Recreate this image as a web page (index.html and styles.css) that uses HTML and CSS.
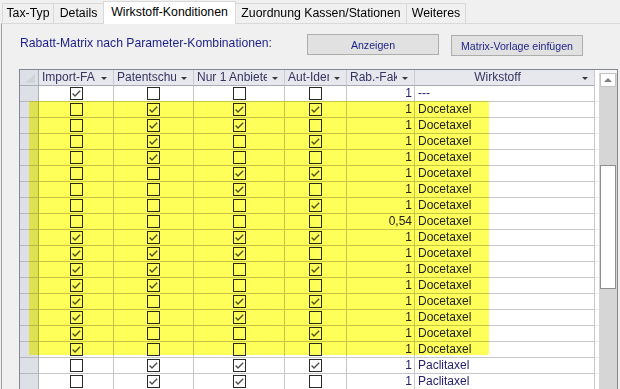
FILE: index.html
```html
<!DOCTYPE html>
<html lang="de">
  <head>
    <meta charset="UTF-8" />
    <title>Wirkstoff-Konditionen</title>
    <link rel="stylesheet" href="styles.css">
  </head>
  <body>
    <!-- Tab strip -->
    <div class="tabs">
      <div class="tab tab-tax">Tax-Typ</div>
      <div class="tab tab-details">Details</div>
      <div class="tab tab-active">Wirkstoff-Konditionen</div>
      <div class="tab tab-kassen">Zuordnung Kassen/Stationen</div>
      <div class="tab tab-weiteres">Weiteres</div>
    </div>

    <div class="panel">
      <div class="toolbar">
        <span class="caption">Rabatt-Matrix nach Parameter-Kombinationen:</span>
        <button class="btn">Anzeigen</button>
        <button class="btn btn-low">Matrix-Vorlage einfügen</button>
      </div>

      <!-- Matrix grid -->
      <div class="grid">
        <div class="grid-body" id="gridBody">
          <div class="row head">
            <div class="cell sel corner">
              <svg width="14" height="12" viewBox="0 0 14 12"><path d="M13 2 L13 11 L3 11 Z" fill="#cfd3da" /></svg>
            </div>
            <div class="cell hcell"><span class="hlabel">Import-FA</span><span class="arrow"></span></div>
            <div class="cell hcell"><span class="hlabel">Patentschutz</span><span class="arrow"></span></div>
            <div class="cell hcell"><span class="hlabel">Nur 1 Anbieter</span><span class="arrow"></span></div>
            <div class="cell hcell"><span class="hlabel">Aut-Idem</span><span class="arrow"></span></div>
            <div class="cell hcell"><span class="hlabel">Rab.-Faktor</span><span class="arrow"></span></div>
            <div class="cell hcell hcenter"><span class="hlabel">Wirkstoff</span><span class="arrow"></span></div>
            <div class="cell filler"></div>
          </div>
        </div>

        <div class="scrollbar">
          <div class="scroll-up"></div>
          <div class="scroll-thumb"></div>
        </div>

        <!-- highlighter marking over the Docetaxel rows -->
        <div class="marker"></div>
      </div>
    </div>

    <script>
      // flags: Import-FA, Patentschutz, Nur 1 Anbieter, Aut-Idem
      const rows = [
        ["1000", "1", "---"],
        ["0111", "1", "Docetaxel"],
        ["0110", "1", "Docetaxel"],
        ["0101", "1", "Docetaxel"],
        ["0100", "1", "Docetaxel"],
        ["0011", "1", "Docetaxel"],
        ["0010", "1", "Docetaxel"],
        ["0001", "1", "Docetaxel"],
        ["0000", "0,54", "Docetaxel"],
        ["1111", "1", "Docetaxel"],
        ["1110", "1", "Docetaxel"],
        ["1101", "1", "Docetaxel"],
        ["1100", "1", "Docetaxel"],
        ["1011", "1", "Docetaxel"],
        ["1010", "1", "Docetaxel"],
        ["1001", "1", "Docetaxel"],
        ["1000", "1", "Docetaxel"],
        ["0111", "1", "Paclitaxel"],
        ["0110", "1", "Paclitaxel"],
      ];

      const checkMark =
        '<svg width="11" height="11" viewBox="0 0 11 11"><path d="M1.6 5.6 L4 8 L9.2 2.8" fill="none" stroke="#505050" stroke-width="1.4" /></svg>';

      const body = document.getElementById("gridBody");

      rows.forEach(([flags, factor, name]) => {
        let html = '<div class="cell sel"></div>';
        for (const flag of flags) {
          html += '<div class="cell check"><span class="box">' +
            (flag === "1" ? checkMark : "") + "</span></div>";
        }
        html += `<div class="cell num">${factor}</div>`;
        html += `<div class="cell text">${name}</div>`;
        html += '<div class="cell filler"></div>';

        const row = document.createElement("div");
        row.className = "row";
        row.innerHTML = html;
        body.appendChild(row);
      });
    </script>
  </body>
</html>
```

FILE: styles.css
```css
* {
  margin: 0;
  padding: 0;
  box-sizing: border-box;
}

body {
  width: 620px;
  height: 389px;
  overflow: hidden;
  background-color: #f0f0f0;
  font-family: "Liberation Sans", Arial, sans-serif;
  font-size: 12px;
  color: #000;
}

/* Tabs */
.tabs {
  display: flex;
  align-items: flex-end;
  height: 23px;
  padding-left: 2px;
}

.tab {
  height: 20px;
  margin-right: -1px;
  border: 1px solid #d9d9d9;
  border-bottom: none;
  background-color: #f0f0f0;
  font-size: 12.3px;
  line-height: 19px;
  text-align: center;
  white-space: nowrap;
}

.tab-tax { width: 52px; }
.tab-details { width: 51px; }
.tab-kassen { width: 172px; }
.tab-weiteres { width: 60px; }

.tab-active {
  position: relative;
  width: 133px;
  height: 23px;
  margin-bottom: -1px;
  background-color: #fff;
  line-height: 20px;
  z-index: 1;
}

/* Tab page */
.panel {
  height: 366px;
  margin-left: 1px;
  border-top: 1px solid #d9d9d9;
  border-left: 1px solid #a0a0a0;
}

.toolbar {
  display: flex;
  align-items: flex-start;
  gap: 12px;
  padding: 10px 0 0 18px;
}

.caption {
  flex: 0 0 275px;
  font-size: 12.2px;
  line-height: 18px;
  color: #1c1f86;
  white-space: nowrap;
}

.btn {
  width: 132px;
  height: 21px;
  border: 1px solid #adadad;
  background-color: #e1e1e1;
  color: #1c1f86;
  font-family: "Liberation Sans", Arial, sans-serif;
  font-size: 10.6px;
}

.btn-low {
  margin-top: 1px;
}

/* Grid */
.grid {
  position: relative;
  display: flex;
  width: 599px;
  height: 330px;
  margin: 13px 0 0 17px;
  border: 1px solid #828790;
  background-color: #fff;
}

.grid-body {
  width: 579px;
}

.row {
  display: grid;
  grid-template-columns: 19px 75px 80px 91px 62px 68px 180px 4px;
  height: 16px;
}

.cell {
  display: flex;
  align-items: center;
  overflow: hidden;
  border-right: 1px solid #c6c6c6;
  border-bottom: 1px solid #c6c6c6;
  line-height: 15px;
  color: #22226a;
  white-space: nowrap;
}

.sel {
  background-color: #dde1e7;
  border-right-color: #a9adb4;
  border-bottom-color: #b4b8bf;
}

.corner {
  align-items: flex-end;
  justify-content: flex-end;
  padding: 0 2px 1px 0;
}

.head .hcell {
  background-color: #e6e8ed;
  border-right-color: #c9ccd2;
  border-bottom-color: #a9acb2;
  color: #34345e;
}

.head .sel {
  border-bottom-color: #a9acb2;
}

.hlabel {
  flex: 1;
  overflow: hidden;
  padding-left: 3px;
}

.hcenter .hlabel {
  text-align: center;
}

.arrow {
  flex: none;
  width: 0;
  height: 0;
  margin: 2px 6px 0 5px;
  border-left: 3px solid transparent;
  border-right: 3px solid transparent;
  border-top: 3px solid #3a3a3a;
}

.check {
  justify-content: center;
}

.box {
  display: block;
  width: 13px;
  height: 13px;
  border: 1px solid #2a2a2a;
  background-color: #fff;
}

.box svg {
  display: block;
}

.num {
  justify-content: flex-end;
  padding-right: 2px;
}

.text {
  padding-left: 3px;
}

.filler {
  border-right: none;
  border-bottom-color: #ececec;
}

.head .filler {
  border-bottom-color: #fff;
}

/* Scrollbar */
.scrollbar {
  width: 18px;
  padding: 0 1px;
  border-top: 3px solid #f6f6f6;
  background-color: #d6d6d6;
}

.scroll-up {
  display: flex;
  align-items: center;
  justify-content: center;
  height: 14px;
  border: 1px solid #c4c4c4;
  background-color: #fff;
}

.scroll-up::after {
  content: "";
  width: 0;
  height: 0;
  border-left: 4px solid transparent;
  border-right: 4px solid transparent;
  border-bottom: 4px solid #7d7d7d;
}

.scroll-thumb {
  height: 124px;
  margin-top: 78px;
  border: 1px solid #8d8d8d;
  background-color: #fff;
}

/* Yellow highlighter */
.marker {
  position: absolute;
  left: 9px;
  top: 31px;
  width: 460px;
  height: 254px;
  background-color: #ffff5a;
  mix-blend-mode: multiply;
  pointer-events: none;
}
```
